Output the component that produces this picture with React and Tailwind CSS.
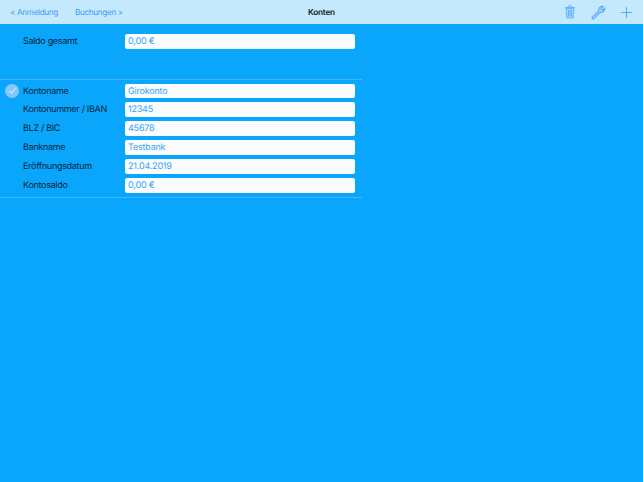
import { Plus } from 'lucide-react';

const rows = [
  { label: 'Kontoname', value: 'Girokonto', checked: true },
  { label: 'Kontonummer / IBAN', value: '12345' },
  { label: 'BLZ / BIC', value: '45678' },
  { label: 'Bankname', value: 'Testbank' },
  { label: 'Eröffnungsdatum', value: '21.04.2019' },
  { label: 'Kontosaldo', value: '0,00 €' },
];

function Field({ label, value, checked }) {
  return (
    <div className="flex h-[18.9px] items-center">
      <div className="flex w-[23px] justify-end pr-[4px]">
        {checked && (
          <span className="flex h-[14px] w-[14px] items-center justify-center rounded-full bg-[#84c8fa]">
            <svg width="9" height="9" viewBox="0 0 10 10" fill="none" stroke="#cfe9fd" strokeWidth="1.2">
              <path d="M1.5 5.5 L4 8 L8.5 2.5" />
            </svg>
          </span>
        )}
      </div>
      <span className="w-[102px] pt-[1px] text-[9px] tracking-[-0.3px] whitespace-nowrap text-[#06233d]">{label}</span>
      <div className="flex h-[14.5px] w-[230px] items-center rounded-[2px] bg-[#fafbfd] pt-[1px] pl-[3px] text-[9px] tracking-[-0.2px] text-[#38a5f5]">
        {value}
      </div>
    </div>
  );
}

export default function App() {
  return (
    <div className="h-[482px] w-[643px] overflow-hidden bg-[#0aa6fb] font-['Inter','Liberation_Sans',sans-serif] [text-rendering:geometricPrecision]">
      <header className="flex h-[24px] items-center bg-[#c5e9fc] pr-[3px] pl-[10px]">
        <span className="w-[65px] pt-[1px] text-[8.2px] tracking-[-0.35px] whitespace-nowrap text-[#3d9bf6]">&lt; Anmeldung</span>
        <span className="w-[233px] pt-[1px] text-[8.2px] tracking-[-0.35px] whitespace-nowrap text-[#3d9bf6]">Buchungen &gt;</span>
        <span className="pt-[1px] text-[8.2px] font-semibold tracking-[-0.2px] text-[#0b1a28]">Konten</span>
        <div className="ml-auto flex items-center text-[#57aaf7]">
          <span className="flex w-[28px] justify-center">
            <svg width="14" height="14" viewBox="0 0 14 14" fill="#a6d8fa" stroke="currentColor" strokeWidth="0.8">
              <path d="M3 3.5 L3.8 13 H10.2 L11 3.5 Z" />
              <path d="M2 2.5 H12 M5.2 2.5 V1 H8.8 V2.5 M5.5 5 V11.5 M7 5 V11.5 M8.5 5 V11.5" fill="none" />
            </svg>
          </span>
          <span className="flex w-[28px] justify-center">
            <svg width="15" height="15" viewBox="0 0 14 14" fill="#a6d8fa" stroke="currentColor" strokeWidth="1">
              <path d="M1 11.6 L7.2 5.4 C6.6 3.4 8.4 0.8 11.3 1.3 L9.4 3.3 L10.7 4.7 L12.8 2.8 C13.2 5.6 10.6 7.4 8.6 6.8 L2.5 13 C1.8 13.5 0.6 12.4 1 11.6 Z" />
            </svg>
          </span>
          <span className="flex w-[28px] justify-center">
            <Plus size={17} strokeWidth={1.5} />
          </span>
        </div>
      </header>

      <section className="w-[362px] pt-[8px]">
        <Field label="Saldo gesamt" value="0,00 €" />
      </section>

      <section className="mt-[28px] w-[362px] border-y border-[#3db6fb] pt-[1.5px] pb-[2.5px]">
        {rows.map((row) => (
          <Field key={row.label} {...row} />
        ))}
      </section>
    </div>
  );
}
